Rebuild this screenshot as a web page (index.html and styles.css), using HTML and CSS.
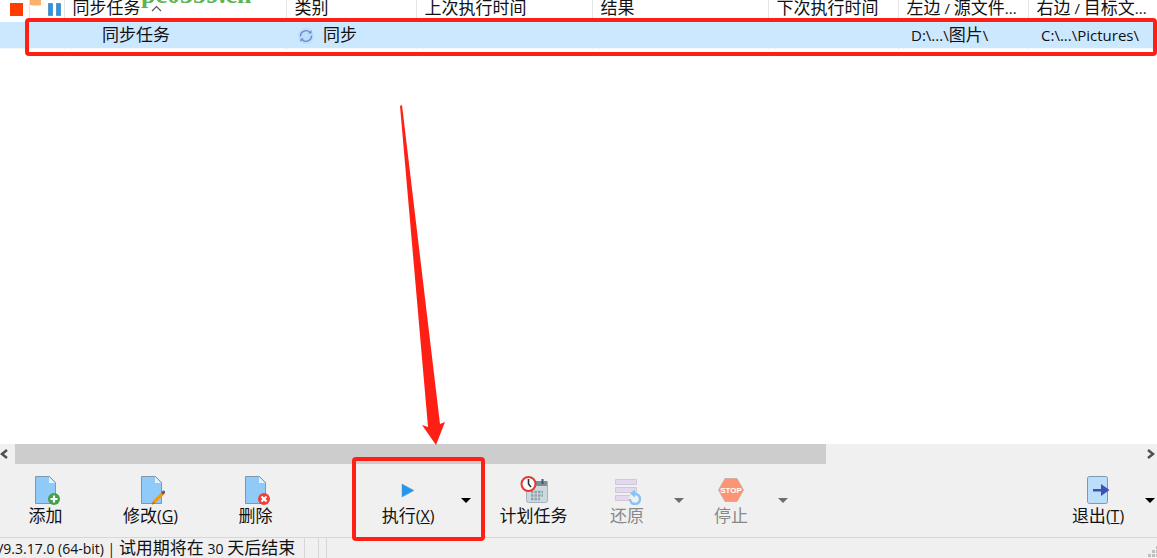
FILE: index.html
```
<!DOCTYPE html>
<html lang="zh-CN">
<head>
    <meta charset="UTF-8">
    <meta name="viewport" content="width=device-width, initial-scale=1.0">
    <title>同步任务</title>
    <link rel="stylesheet" href="styles.css">
</head>
<body>
    <main class="task-area">
        <table class="task-table">
            <colgroup>
                <col class="col-stop">
                <col class="col-pause">
                <col class="col-name">
                <col class="col-small">
                <col class="col-time">
                <col class="col-time">
                <col class="col-small">
                <col class="col-small">
                <col>
            </colgroup>
            <thead>
                <tr>
                    <th class="icon-cell"><svg width="28" height="20"><path d="M10 3h13v13H10z" fill="#ff3d00"/></svg></th>
                    <th class="icon-cell"><svg width="34" height="20"><path d="M0 0h11v5q-5 1-11 0z" fill="#f7b267"/><path d="M18.500 3.500h4v12h-4zM26.500 3.500h4v12h-4z" fill="#2196f3" stroke="#5a96c4"/></svg></th>
                    <th>同步任务<svg class="sort" width="11" height="7"><path d="M1 6l4.500-4.500L10 6" fill="none" stroke="#555" stroke-width="1.200"/></svg></th>
                    <th>类别</th>
                    <th>上次执行时间</th>
                    <th>结果</th>
                    <th>下次执行时间</th>
                    <th>左边<span class="latin"> / </span>源文件<span class="latin">...</span></th>
                    <th>右边<span class="latin"> / </span>目标文<span class="latin">...</span></th>
                </tr>
            </thead>
            <tbody>
                <tr>
                    <td></td>
                    <td></td>
                    <td class="name">同步任务</td>
                    <td class="type"><svg class="sync" width="16" height="16" viewBox="0 0 16 16"><circle cx="8" cy="8" r="8" fill="#bbdefb"/><path d="M2.500 8.500a5.500 5.500 0 0 1 9-4.500M13.500 7.500a5.500 5.500 0 0 1-9 4.500" fill="none" stroke="#6f86d6" stroke-width="1.400"/><path d="M10 5.500h3.500V2zM6 10.500H2.500V14z" fill="#6f86d6"/></svg>同步</td>
                    <td></td>
                    <td></td>
                    <td></td>
                    <td class="path"><span class="latin">D:\...\</span>图片<span class="latin">\</span></td>
                    <td class="path"><span class="latin">C:\...\Pictures\</span></td>
                </tr>
            </tbody>
        </table>
        <div class="watermark">pc0359.cn</div>
        <div class="row-mark"></div>
        <svg class="arrow" width="80" height="360"><path d="M20 11l2-1 38 319 5-2-9 23-14-20 6 2z" fill="#ff2015"/></svg>
    </main>

    <div class="scrollbar">
        <button type="button" class="scroll-btn" aria-label="向左"><svg width="8" height="10"><path d="M7 1L2 5l5 4" fill="none" stroke="#505050" stroke-width="2.500"/></svg></button>
        <div class="track"><div class="thumb"></div></div>
        <button type="button" class="scroll-btn" aria-label="向右"><svg width="10" height="10"><path d="M1 1l5 4-5 4" fill="none" stroke="#505050" stroke-width="2.500"/></svg></button>
    </div>

    <div class="toolbar">
        <button type="button" class="tool">
            <svg width="28" height="30" viewBox="0 0 28 30"><path d="M3.500 1.500h14l6 6v21h-20z" fill="#90caf9" stroke="#8298a8"/><path d="M17 2v6h6z" fill="#e3f2fd"/><circle cx="22" cy="24" r="6" fill="#43a047"/><path d="M22 20.500v7M18.500 24h7" stroke="#fff" stroke-width="2.200"/></svg>
            <span>添加</span>
        </button>
        <button type="button" class="tool">
            <svg width="28" height="30" viewBox="0 0 28 30"><path d="M4.500 1.500h14l6 6v21h-20z" fill="#90caf9" stroke="#8298a8"/><path d="M18 2v6h6z" fill="#e3f2fd"/><path d="M15 29.500l1.500-4.500 8-7.500 2 2.500-8 8z" fill="#ff9800"/><path d="M24 17.500l2-2 2 .5v2l-2 2z" fill="#795563"/><path d="M15 29.500l1-3 2 2z" fill="#8b7044"/></svg>
            <span>修改<span class="key">(<u>G</u>)</span></span>
        </button>
        <button type="button" class="tool">
            <svg width="28" height="30" viewBox="0 0 28 30"><path d="M3.500 1.500h14l6 6v21h-20z" fill="#90caf9" stroke="#8298a8"/><path d="M17 2v6h6z" fill="#e3f2fd"/><circle cx="22" cy="24" r="6" fill="#f13f36"/><path d="M19.500 21.500l5 5M24.500 21.500l-5 5" stroke="#fff" stroke-width="2.200"/></svg>
            <span>删除</span>
        </button>
        <div class="run-group">
            <button type="button" class="tool tool-run">
                <svg width="28" height="30" viewBox="0 0 28 30"><path d="M8 9l12 6.500L8 22z" fill="#2196f3" stroke="#7694ad" stroke-width=".5"/></svg>
                <span>执行<span class="key">(<u>X</u>)</span></span>
            </button>
            <button type="button" class="caret" aria-label="执行选项"></button>
        </div>
        <button type="button" class="tool">
            <svg width="28" height="30" viewBox="0 0 28 30"><path d="M6.500 6.500h21v19q0 2-2 2h-17q-2 0-2-2z" fill="#cfd8dc" stroke="#a4b2b9"/><path d="M6 6h21v5H6z" fill="#78909c"/><path d="M22.500 4v5" stroke="#455a64" stroke-width="2"/><path d="M11 17h12M11 20.500h12M11 24h9" stroke="#8fa3ad" stroke-width="2.500" stroke-dasharray="2.500 1"/><circle cx="8.500" cy="9" r="7" fill="#fff" stroke="#e53935" stroke-width="2"/><path d="M8.500 4v5l2.500 3" fill="none" stroke="#263238" stroke-width="1.600"/></svg>
            <span>计划任务</span>
        </button>
        <button type="button" class="tool tool-narrow" disabled>
            <svg width="28" height="30" viewBox="0 0 28 30"><g fill="#e3d9ef" stroke="#d0c8d8"><path d="M2.500 4.500h21v5h-21zM2.500 12.500h21v5h-21zM2.500 20.500h21v5h-21z"/></g><circle cx="22" cy="24" r="6" fill="#f0f0f0"/><path d="M22 19a5 5 0 1 1-5 5" fill="none" stroke="#86c3f2" stroke-width="2.500"/><path d="M22 14.500v8l-5-4z" fill="#86c3f2"/></svg>
            <span>还原</span>
        </button>
        <button type="button" class="caret" aria-label="还原选项" disabled></button>
        <button type="button" class="tool tool-narrow" disabled>
            <svg width="28" height="30" viewBox="0 0 28 30"><path d="M8 3.500h12l6.500 11.500L20 26.500H8L1.500 15z" fill="#fb9576" stroke="#c9a99c" stroke-width=".8"/><text x="14" y="18" class="stop-text">STOP</text></svg>
            <span>停止</span>
        </button>
        <button type="button" class="caret" aria-label="停止选项" disabled></button>
        <div class="spacer"></div>
        <button type="button" class="tool tool-narrow">
            <svg width="28" height="30" viewBox="0 0 28 30"><rect x="3.500" y="1.500" width="20" height="27" rx="2" fill="#bbdefb" stroke="#8298a8"/><path d="M9 14h8v-5l8.500 6-8.500 6v-4.500H9z" fill="#3f51b5"/></svg>
            <span>退出<span class="key">(<u>T</u>)</span></span>
        </button>
        <button type="button" class="caret" aria-label="退出选项"></button>
    </div>

    <footer class="status-bar">
        <div class="status-text"><span class="version">V9.3.17.0 (64-bit) | </span>试用期将在<span class="version"> 30 </span>天后结束</div>
        <div class="status-cell"></div>
        <div class="status-cell status-end"></div>
        <svg class="grip" width="9" height="12"><path d="M8 0h3v3H8zM4 4h3v3H4zM8 4h3v3H8zM0 8h3v3H0zM4 8h3v3H4zM8 8h3v3H8z" fill="#bfbfbf"/></svg>
    </footer>
</body>
</html>
```

FILE: styles.css
```
* {
    box-sizing: border-box;
}
body {
    margin: 0;
    height: 100vh;
    display: flex;
    flex-direction: column;
    overflow: hidden;
    background: #f0f0f0;
    color: #111;
    font-family: "Open Sans", "Noto Sans CJK SC", sans-serif;
    font-size: 17px;
    line-height: 20px;
}
button {
    border: none;
    padding: 0;
    background: none;
    color: inherit;
    font: inherit;
}
svg {
    display: block;
}
.latin {
    font-size: 15px;
}

/* task list */
.task-area {
    flex: 1;
    min-height: 0;
    position: relative;
    background: #fff;
}
.task-table {
    width: 100%;
    table-layout: fixed;
    border-collapse: collapse;
}
.col-stop {
    width: 29px;
}
.col-pause {
    width: 35px;
}
.col-name {
    width: 222px;
}
.col-small {
    width: 130px;
}
.col-time {
    width: 176px;
}
.task-table th,
.task-table td {
    padding: 0 0 0 8px;
    text-align: left;
    font-weight: normal;
    white-space: nowrap;
}
.task-table th {
    height: 22px;
    padding-bottom: 6px;
    line-height: 16px;
    border-right: 1px solid #e5e5e5;
}
.task-table th:last-child {
    border-right: none;
}
.task-table .icon-cell {
    padding: 0;
    vertical-align: top;
}
.task-table td {
    height: 26px;
    background: #cce8ff;
    border-bottom: 1px dotted #e8f0f6;
}
.task-table .name {
    padding-left: 38px;
}
.task-table .type {
    padding-left: 12px;
}
.task-table .path {
    padding-left: 13px;
}
.sort {
    display: inline-block;
    vertical-align: 2px;
    margin-left: 10px;
}
.sync {
    display: inline-block;
    vertical-align: -3px;
    margin-right: 9px;
}
.watermark {
    position: absolute;
    left: 141px;
    top: -18px;
    color: #5ab552;
    font-family: "Liberation Serif", serif;
    font-weight: bold;
    font-size: 26px;
    line-height: 25px;
}
.row-mark {
    position: absolute;
    left: 25px;
    right: 0;
    top: 18px;
    height: 38px;
    border: 4px solid #ff2015;
    border-radius: 4px;
}
.arrow {
    position: absolute;
    left: 380px;
    top: 95px;
    z-index: 1;
}

/* horizontal scrollbar */
.scrollbar {
    display: flex;
    height: 20px;
}
.scroll-btn {
    width: 15px;
    display: flex;
    align-items: center;
    justify-content: flex-start;
}
.scroll-btn:last-child {
    justify-content: flex-end;
}
.track {
    flex: 1;
}
.thumb {
    width: 72%;
    height: 100%;
    background: #cdcdcd;
}

/* toolbar */
.toolbar {
    display: flex;
    height: 74px;
    margin: 0 -4px 0 -7px;
    border-bottom: 1px solid #d7d7d7;
}
.tool {
    width: 105px;
    padding-top: 11px;
    display: flex;
    flex-direction: column;
    align-items: center;
    gap: 1px;
}
.tool-narrow {
    width: 82px;
}
.tool-run {
    width: 94px;
}
.key {
    font-size: 16px;
}
.caret {
    width: 22px;
    display: flex;
    align-items: center;
    justify-content: center;
}
.caret::before {
    content: "";
    border: 5px solid transparent;
    border-top-color: #000;
    border-bottom: none;
}
.tool:disabled {
    color: #888;
}
.caret:disabled::before {
    border-top-color: #6d6d6d;
}
.run-group {
    display: flex;
    position: relative;
    margin-left: 53px;
    margin-right: 4px;
}
.run-group::after {
    content: "";
    position: absolute;
    inset: -7px -8px -4px -9px;
    border: 4px solid #ff2015;
    border-radius: 4px;
    pointer-events: none;
}
.stop-text {
    fill: #fff;
    font-family: "Liberation Sans", sans-serif;
    font-weight: bold;
    font-size: 8px;
    text-anchor: middle;
}
.spacer {
    flex: 1;
}

/* status bar */
.status-bar {
    display: flex;
    height: 20px;
}
.status-text {
    width: 309px;
    margin-left: -5px;
    white-space: nowrap;
}
.version {
    font-size: 14px;
}
.status-cell {
    width: 14px;
    border-left: 1px solid #d7d7d7;
}
.status-end {
    width: 9px;
    border-right: 1px solid #d7d7d7;
}
.grip {
    margin-left: auto;
    align-self: flex-end;
}
```
